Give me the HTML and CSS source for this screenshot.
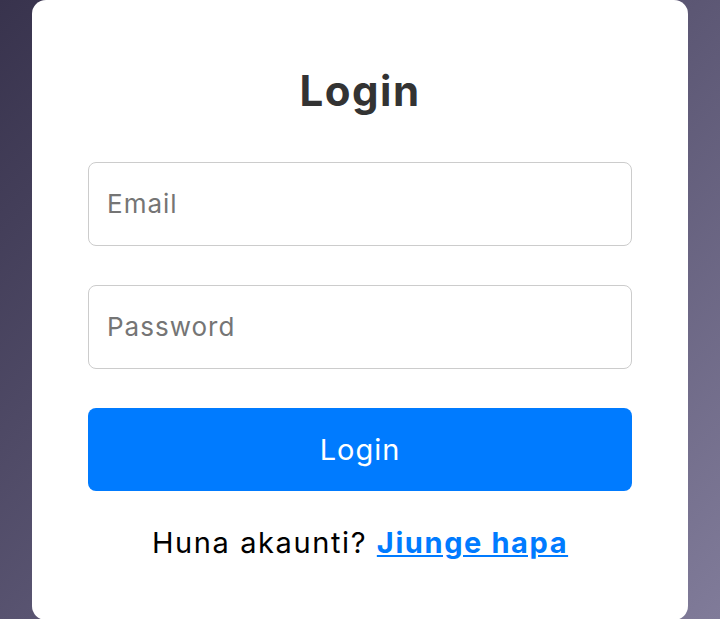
FILE: index.html
```html
<!DOCTYPE html>
<html lang="sw">
<head>
<meta charset="utf-8">
<title>Login</title>
<link rel="stylesheet" href="styles.css">
</head>
<body>
<div class="card">
  <h2 class="title">Login</h2>
  <form class="form">
    <input class="field" type="email" placeholder="Email">
    <input class="field" type="password" placeholder="Password">
    <button class="btn" type="button">Login</button>
  </form>
  <p class="footer">Huna akaunti? <a class="link" href="#">Jiunge hapa</a></p>
</div>
</body>
</html>
```
FILE: styles.css
```css
* { box-sizing: border-box; }
html, body { margin: 0; height: 100%; }
body {
  font-family: "Inter", "Noto Sans", sans-serif;
  background: linear-gradient(135deg, #38334d 0%, #5a5572 50%, #807b99 100%);
  display: flex;
  align-items: center;
  justify-content: center;
  overflow: hidden;
}
.card {
  width: 656px;
  background: #fff;
  border-radius: 14px;
  padding: 64px 56px 56px;
  flex-shrink: 0;
}
.title {
  margin: 0 0 44px;
  text-align: center;
  font-size: 42px;
  line-height: 54px;
  font-weight: 700;
  letter-spacing: 1.5px;
  color: #333;
}
.form {
  display: flex;
  flex-direction: column;
  gap: 39px;
}
.field {
  height: 84px;
  width: 100%;
  border: 1px solid #ccc;
  border-radius: 8px;
  padding: 0 18px;
  font-family: inherit;
  font-size: 26px;
  letter-spacing: 1px;
  color: #333;
  background: #fff;
  outline: none;
}
.field::placeholder { color: #757575; }
.btn {
  height: 83px;
  width: 100%;
  border: none;
  border-radius: 8px;
  background: #007bff;
  color: #fff;
  font-family: inherit;
  font-size: 29px;
  letter-spacing: 1px;
  font-weight: 400;
}
.footer {
  margin: 31px 0 0;
  text-align: center;
  font-size: 29px;
  letter-spacing: 1.6px;
  line-height: 42px;
  color: #000;
}
.link {
  color: #007bff;
  font-weight: 700;
  text-decoration: underline;
}
```
